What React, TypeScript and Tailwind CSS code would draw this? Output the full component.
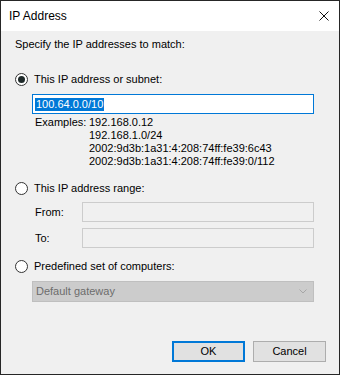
import React from "react";

function Radio({ checked }: { checked?: boolean }) {
  return (
    <span className="w-[13px] h-[13px] rounded-full border border-[#333333] bg-white flex items-center justify-center shrink-0">
      {checked && <span className="w-[7px] h-[7px] rounded-full bg-[#1f2a2a]" />}
    </span>
  );
}

export default function App() {
  const examples = [
    "192.168.0.12",
    "192.168.1.0/24",
    "2002:9d3b:1a31:4:208:74ff:fe39:6c43",
    "2002:9d3b:1a31:4:208:74ff:fe39:0/112",
  ];

  return (
    <div className="w-[340px] h-[375px] border border-[#262626] flex flex-col font-['Liberation_Sans',Arial,sans-serif] text-[11px] text-black">
      {/* title bar */}
      <div className="h-[30px] bg-white flex items-center justify-between pl-[8px] pr-[10px] shrink-0">
        <span className="text-[12px]">IP Address</span>
        <svg width="10" height="10" viewBox="0 0 10 10">
          <path d="M0.5 0.5 L9.5 9.5 M9.5 0.5 L0.5 9.5" stroke="#111" strokeWidth="1" />
        </svg>
      </div>

      {/* body */}
      <div className="flex-1 bg-[#f0f0f0] flex flex-col pl-[14px] pr-[13px]">
        <div className="mt-[6px] h-[15px] leading-[15px]">Specify the IP addresses to match:</div>

        <div className="mt-[21px] h-[13px] flex items-center gap-[6px]">
          <Radio checked />
          <span className="leading-[15px]">This IP address or subnet:</span>
        </div>

        <div className="mt-[8px] ml-[17px] w-[282px] h-[20px] border border-[#0078d7] bg-white flex items-center pl-[2px]">
          <span className="bg-[#0078d7] text-white leading-[13px] px-[1px]">100.64.0.0/10</span>
        </div>

        <div className="mt-[2px] ml-[20px] flex leading-[13px]">
          <span className="w-[54px] shrink-0">Examples:</span>
          <div className="flex flex-col">
            {examples.map((e) => (
              <span key={e} className="h-[13px]">{e}</span>
            ))}
          </div>
        </div>

        <div className="mt-[14px] h-[13px] flex items-center gap-[6px]">
          <Radio />
          <span className="leading-[15px]">This IP address range:</span>
        </div>

        <div className="mt-[7px] ml-[20px] flex items-center">
          <span className="w-[47px]">From:</span>
          <div className="w-[232px] h-[20px] border border-[#cccccc] bg-[#f0f0f0]" />
        </div>
        <div className="mt-[6px] ml-[20px] flex items-center">
          <span className="w-[47px]">To:</span>
          <div className="w-[232px] h-[20px] border border-[#cccccc] bg-[#f0f0f0]" />
        </div>

        <div className="mt-[12px] h-[13px] flex items-center gap-[6px]">
          <Radio />
          <span className="leading-[15px]">Predefined set of computers:</span>
        </div>

        <div className="mt-[8px] ml-[17px] w-[282px] h-[21px] border border-[#bfbfbf] bg-[#cccccc] flex items-center justify-between pl-[3px] pr-[6px]">
          <span className="text-[#6d6d6d]">Default gateway</span>
          <svg width="8" height="5" viewBox="0 0 8 5">
            <path d="M0.5 0.5 L4 4 L7.5 0.5" fill="none" stroke="#a6a6a6" strokeWidth="1" />
          </svg>
        </div>

        <div className="mt-[39px] flex justify-end gap-[8px]">
          <button className="w-[73px] h-[21px] border-2 border-[#0078d7] bg-[#e1e1e1] flex items-center justify-center">
            OK
          </button>
          <button className="w-[73px] h-[21px] border border-[#adadad] bg-[#e1e1e1] flex items-center justify-center">
            Cancel
          </button>
        </div>
      </div>
    </div>
  );
}
